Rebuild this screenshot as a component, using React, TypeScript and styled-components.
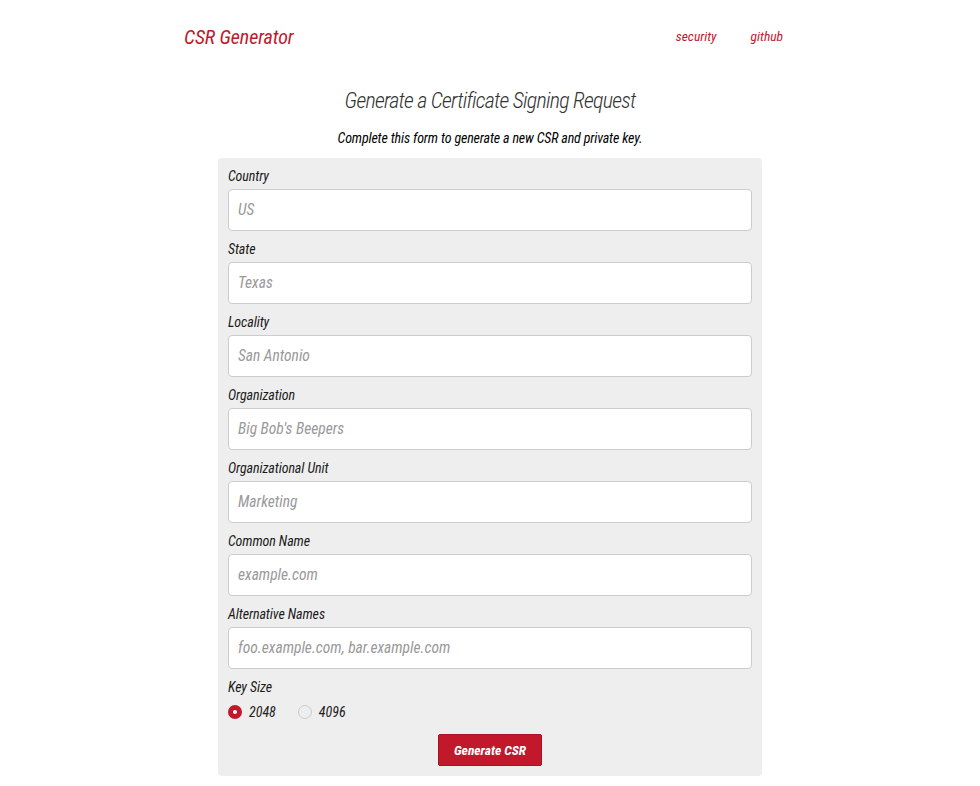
import styled, { createGlobalStyle } from 'styled-components';

const fields = [
  { label: 'Country', placeholder: 'US' },
  { label: 'State', placeholder: 'Texas' },
  { label: 'Locality', placeholder: 'San Antonio' },
  { label: 'Organization', placeholder: "Big Bob's Beepers" },
  { label: 'Organizational Unit', placeholder: 'Marketing' },
  { label: 'Common Name', placeholder: 'example.com' },
  { label: 'Alternative Names', placeholder: 'foo.example.com, bar.example.com' },
];

const App = () => {
  return (
    <>
      <GlobalStyle />
      <Page>
        <Header>
          <Brand href="#">CSR Generator</Brand>
          <Nav>
            <NavLink href="#">security</NavLink>
            <NavLink href="#">github</NavLink>
          </Nav>
        </Header>

        <Title>Generate a Certificate Signing Request</Title>
        <Subtitle>Complete this form to generate a new CSR and private key.</Subtitle>

        <FormBox>
          {fields.map((f) => (
            <Field key={f.label}>
              <Label>{f.label}</Label>
              <Input placeholder={f.placeholder} />
            </Field>
          ))}

          <Label>Key Size</Label>
          <RadioRow>
            <RadioOption>
              <Radio type="radio" name="keysize" defaultChecked />
              2048
            </RadioOption>
            <RadioOption>
              <Radio type="radio" name="keysize" />
              4096
            </RadioOption>
          </RadioRow>

          <ButtonRow>
            <SubmitButton type="button">Generate CSR</SubmitButton>
          </ButtonRow>
        </FormBox>
      </Page>
    </>
  );
};

export default App;

const GlobalStyle = createGlobalStyle`
  * {
    box-sizing: border-box;
  }
  body {
    margin: 0;
    background: #ffffff;
    font-family: "Roboto Condensed", "Liberation Sans", Arial, sans-serif;
    font-stretch: condensed;
    font-style: italic;
    color: #222222;
  }
`;

const Page = styled.div`
  width: 620px;
  margin: 0 auto;
  display: flex;
  flex-direction: column;
  align-items: center;
`;

const Header = styled.header`
  width: 100%;
  height: 74px;
  display: flex;
  align-items: center;
  justify-content: space-between;
  padding-left: 4px;
`;

const Brand = styled.a`
  color: #c1192b;
  font-size: 20px;
  text-decoration: none;
  letter-spacing: -0.1px;
`;

const Nav = styled.nav`
  display: flex;
  align-items: center;
  margin-top: -2px;
`;

const NavLink = styled.a`
  color: #c1192b;
  font-size: 13.5px;
  text-decoration: none;
  padding: 0 17px;
`;

const Title = styled.h1`
  margin: 12px 0 0;
  font-size: 22px;
  line-height: 30px;
  font-weight: 300;
  color: #333333;
  letter-spacing: -0.75px;
`;

const Subtitle = styled.p`
  margin: 14px 0 0;
  font-size: 14px;
  line-height: 16px;
  font-weight: 400;
  letter-spacing: -0.15px;
  color: #000000;
`;

const FormBox = styled.form`
  width: 544px;
  margin: 12px 0 0;
  padding: 10px;
  background: #eeeeee;
  border-radius: 4px;
`;

const Field = styled.div`
  margin-bottom: 10px;
`;

const Label = styled.label`
  display: block;
  font-size: 14px;
  line-height: 16px;
  font-weight: 400;
  letter-spacing: -0.1px;
  color: #1a1a1a;
  margin-bottom: 5px;
`;

const Input = styled.input`
  display: block;
  width: 100%;
  height: 42px;
  padding: 0 9px;
  border: 1px solid #cccccc;
  border-radius: 4px;
  background: #ffffff;
  font-family: inherit;
  font-stretch: condensed;
  font-style: italic;
  font-size: 15.5px;
  color: #333333;
  outline: none;

  &::placeholder {
    color: #999999;
  }
`;

const RadioRow = styled.div`
  display: flex;
  align-items: center;
  gap: 22px;
  margin-top: 8px;
  height: 18px;
`;

const RadioOption = styled.label`
  display: flex;
  align-items: center;
  gap: 7px;
  font-size: 14px;
  color: #222222;
`;

const Radio = styled.input`
  appearance: none;
  margin: 0;
  width: 14px;
  height: 14px;
  border-radius: 50%;
  border: 1px solid #cccccc;
  background: #eeeeee;

  &:checked {
    border: 5px solid #c1192b;
    background: #ffffff;
  }
`;

const ButtonRow = styled.div`
  display: flex;
  justify-content: center;
  margin-top: 13px;
`;

const SubmitButton = styled.button`
  width: 104px;
  height: 32px;
  border: 1px solid #a81424;
  border-radius: 2px;
  background: #c1192b;
  color: #ffffff;
  font-family: inherit;
  font-stretch: condensed;
  font-style: italic;
  font-weight: 700;
  font-size: 13.5px;
  cursor: pointer;
`;
